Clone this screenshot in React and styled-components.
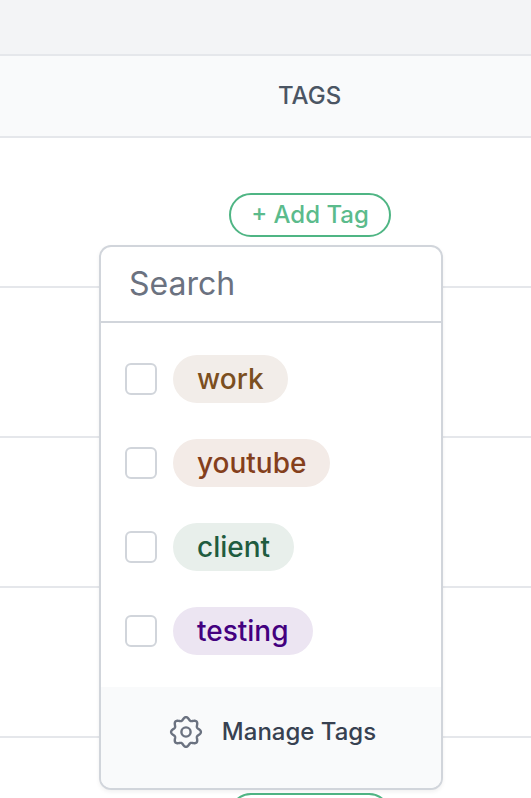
import React from "react";
import styled, { createGlobalStyle } from "styled-components";

const Global = createGlobalStyle`
  html, body { margin: 0; padding: 0; background: #fff; }
  body { font-family: Inter, "Liberation Sans", sans-serif; width: 531px; height: 798px; overflow: hidden; }
`;

const Page = styled.div`
  position: relative;
  width: 531px;
  height: 798px;
  overflow: hidden;
`;
const TopBand = styled.div`
  height: 54px;
  background: #f3f4f6;
  border-bottom: 2px solid #e5e7eb;
`;
const HeaderRow = styled.div`
  height: 80px;
  background: #f9fafb;
  border-bottom: 2px solid #e5e7eb;
  display: flex;
  align-items: center;
  padding-left: 278px;
`;
const HeaderLabel = styled.span`
  font-size: 24px;
  font-weight: 500;
  color: #4b5563;
  line-height: 32px;
`;
const Row = styled.div`
  height: 93px;
  padding-top: 55px;
  border-bottom: 2px solid #e5e7eb;
  display: flex;
  padding-left: 229px;
`;
const AddTag = styled.button`
  box-sizing: border-box;
  width: 162px;
  height: 44px;
  border: 2px solid #4fb584;
  border-radius: 22px;
  background: #fff;
  color: #5bbb8c;
  font: 500 24px/32px Inter, sans-serif;
  padding: 0;
`;
const Popover = styled.div`
  position: absolute;
  left: 99px;
  top: 245px;
  width: 344px;
  height: 545px;
  box-sizing: border-box;
  border: 2px solid #d1d5db;
  border-radius: 12px;
  background: #fff;
  box-shadow: 0 2px 4px rgba(0, 0, 0, 0.06);
  overflow: hidden;
  display: flex;
  flex-direction: column;
`;
const SearchBox = styled.div`
  height: 74px;
  flex: none;
  border-bottom: 2px solid #d1d5db;
  padding-left: 28px;
  display: flex;
  align-items: center;
  font-size: 32px;
  line-height: 40px;
  color: #6b7280;
`;
const TagList = styled.div`
  flex: 1;
  padding: 32px 24px 0;
  display: flex;
  flex-direction: column;
  gap: 36px;
`;
const TagRow = styled.div`
  display: flex;
  align-items: center;
  gap: 16px;
  height: 48px;
`;
const Check = styled.span`
  box-sizing: border-box;
  width: 32px;
  height: 32px;
  border: 2px solid #d1d5db;
  border-radius: 6px;
  background: #fff;
`;
const Pill = styled.span`
  height: 48px;
  padding: 0 24px;
  border-radius: 24px;
  display: flex;
  align-items: center;
  font-size: 28px;
  font-weight: 500;
  color: ${(p) => p.$fg};
  background: ${(p) => p.$bg};
`;
const Footer = styled.div`
  height: 89px;
  padding: 0 0 12px 3px;
  flex: none;
  background: #f9fafb;
  display: flex;
  align-items: center;
  justify-content: center;
  gap: 19px;
  color: #374151;
  font-size: 24px;
  font-weight: 500;
`;
const GearIcon = styled.svg`
  width: 34px;
  height: 34px;
  color: #6b7280;
`;

const tags = [
  { name: "work", fg: "#7b4f1f", bg: "#f2ede9" },
  { name: "youtube", fg: "#843f1c", bg: "#f3ebe7" },
  { name: "client", fg: "#1f5c3f", bg: "#e8efeb" },
  { name: "testing", fg: "#43007f", bg: "#ece5f2" },
];

const gearPath = (() => {
  const pts = [];
  for (let i = 0; i < 240; i++) {
    const a = (i / 240) * Math.PI * 2;
    const r = 13.4 + 1.5 * Math.cos(8 * a);
    pts.push(`${(17 + r * Math.cos(a)).toFixed(2)} ${(17 + r * Math.sin(a)).toFixed(2)}`);
  }
  return `M${pts.join("L")}Z`;
})();

export default function App() {
  return (
    <Page>
      <Global />
      <TopBand />
      <HeaderRow><HeaderLabel>TAGS</HeaderLabel></HeaderRow>
      {[0, 1, 2, 3, 4].map((i) => (
        <Row key={i}><AddTag>+ Add Tag</AddTag></Row>
      ))}
      <Popover>
        <SearchBox>Search</SearchBox>
        <TagList>
          {tags.map((t) => (
            <TagRow key={t.name}>
              <Check />
              <Pill $fg={t.fg} $bg={t.bg}>{t.name}</Pill>
            </TagRow>
          ))}
        </TagList>
        <Footer>
          <GearIcon viewBox="0 0 34 34" fill="none" stroke="currentColor" strokeWidth="2.4" strokeLinejoin="round">
            <path d={gearPath} />
            <circle cx="17" cy="17" r="4.6" />
          </GearIcon>
          Manage Tags
        </Footer>
      </Popover>
    </Page>
  );
}
